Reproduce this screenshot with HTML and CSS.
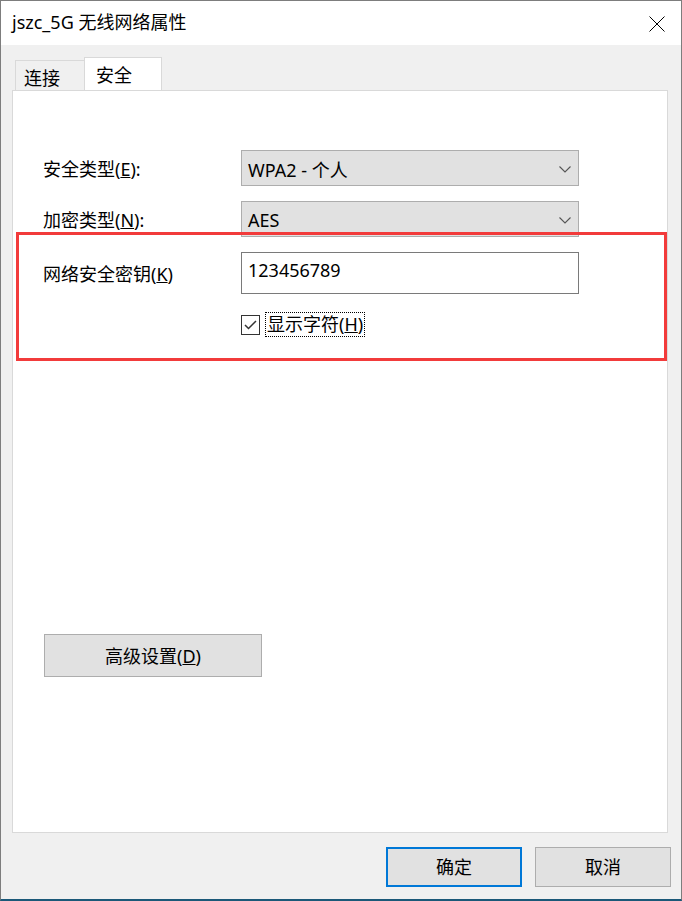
FILE: index.html
```html
<!DOCTYPE html>
<html lang="zh-CN">
<head>
    <meta charset="UTF-8">
    <meta name="viewport" content="width=device-width, initial-scale=1.0">
    <title>jszc_5G 无线网络属性</title>
    <link rel="stylesheet" href="styles.css">
</head>
<body>
    <div class="window">
        <div class="titlebar">
            <span class="title">jszc_5G 无线网络属性</span>
            <svg class="close" width="16" height="16" viewBox="0 0 16 16">
                <path d="M0.5 0.5 L15.5 15.5 M15.5 0.5 L0.5 15.5" stroke="#000" stroke-width="1" fill="none"/>
            </svg>
        </div>

        <div class="client">
            <div class="tabs">
                <div class="tab">连接</div>
                <div class="tab active">安全</div>
            </div>

            <div class="panel">
                <div class="row">
                    <label>安全类型(<u>E</u>):</label>
                    <div class="combo">
                        <span>WPA2 - 个人</span>
                        <svg width="12" height="7" viewBox="0 0 12 7">
                            <path d="M0.5 0.5 L6 6 L11.5 0.5" stroke="#555" stroke-width="1.1" fill="none"/>
                        </svg>
                    </div>
                </div>

                <div class="row">
                    <label>加密类型(<u>N</u>):</label>
                    <div class="combo">
                        <span>AES</span>
                        <svg width="12" height="7" viewBox="0 0 12 7">
                            <path d="M0.5 0.5 L6 6 L11.5 0.5" stroke="#555" stroke-width="1.1" fill="none"/>
                        </svg>
                    </div>
                </div>

                <div class="row">
                    <label>网络安全密钥(<u>K</u>)</label>
                    <div class="edit">123456789</div>
                </div>

                <div class="row check-row">
                    <span></span>
                    <div class="check">
                        <span class="box">
                            <svg width="13" height="10" viewBox="0 0 13 10">
                                <path d="M1 5 L4.5 8.5 L12 1" stroke="#333" stroke-width="1.5" fill="none"/>
                            </svg>
                        </span>
                        <span class="check-label">显示字符(<u>H</u>)</span>
                    </div>
                </div>

                <button class="btn advanced">高级设置(<u>D</u>)</button>

                <!-- annotation over the key rows -->
                <div class="highlight"></div>
            </div>

            <div class="footer">
                <button class="btn default">确定</button>
                <button class="btn">取消</button>
            </div>
        </div>
    </div>
</body>
</html>
```

FILE: styles.css
```css
body {
    margin: 0;
    font-family: "Noto Sans", "Noto Sans CJK SC", sans-serif;
    font-size: 18px;
    color: #000;
}
.window {
    width: 682px;
    height: 901px;
    box-sizing: border-box;
    border: 1px solid #7d7d7d;
    border-bottom: 2px solid #1b5878;
    display: flex;
    flex-direction: column;
}
.titlebar {
    height: 44px;
    flex: none;
    background: #fff;
    display: flex;
    align-items: center;
    justify-content: space-between;
    padding: 0 16px 0 11px;
}
.title {
    line-height: 1;
    margin-top: -2px;
}
.close {
    margin-top: 1px;
}
.client {
    flex: 1;
    background: #f0f0f0;
    padding: 12px 13px 0 11px;
    display: flex;
    flex-direction: column;
}
.tabs {
    height: 33px;
    display: flex;
    align-items: flex-end;
    padding-left: 3px;
}
.tab {
    box-sizing: border-box;
    height: 30px;
    width: 70px;
    padding-left: 8px;
    border: 1px solid #d9d9d9;
    border-bottom: none;
    line-height: 30px;
    padding-top: 2px;
}
.tab.active {
    position: relative;
    width: 78px;
    height: 34px;
    margin-left: -1px;
    margin-bottom: -1px;
    padding-left: 11px;
    padding-top: 0;
    background: #fff;
    line-height: 34px;
}
.panel {
    position: relative;
    height: 743px;
    box-sizing: border-box;
    background: #fff;
    border: 1px solid #d9d9d9;
    padding: 59px 0 0 30px;
}
.row {
    display: grid;
    grid-template-columns: 198px 338px;
    align-items: center;
    margin-bottom: 15px;
}
.row label {
    line-height: 1;
    padding-top: 2px;
}
.combo {
    box-sizing: border-box;
    height: 36px;
    background: #e1e1e1;
    border: 1px solid #adadad;
    display: flex;
    align-items: center;
    justify-content: space-between;
    padding: 2px 7px 0 6px;
}
.edit {
    box-sizing: border-box;
    height: 42px;
    border: 1px solid #7a7a7a;
    padding: 5px 6px 0;
    line-height: 24px;
}
.check-row {
    margin-top: 18px;
    margin-bottom: 0;
}
.check {
    display: flex;
    align-items: center;
    height: 25px;
}
.box {
    box-sizing: border-box;
    width: 19px;
    height: 20px;
    border: 1px solid #333;
    display: flex;
    align-items: center;
    justify-content: center;
}
.check-label {
    margin-left: 5px;
    border: 1px dotted #000;
    padding: 0 1px;
    line-height: 23px;
}
.btn {
    box-sizing: border-box;
    font: inherit;
    color: #000;
    background: #e1e1e1;
    border: 1px solid #adadad;
    padding: 0;
    line-height: 1;
}
.advanced {
    display: block;
    width: 218px;
    height: 43px;
    margin: 297px 0 0 1px;
}
.highlight {
    position: absolute;
    left: 3px;
    top: 141px;
    width: 651px;
    height: 129px;
    box-sizing: border-box;
    border: 3px solid #f23b3b;
}
.footer {
    display: flex;
    justify-content: flex-end;
    gap: 13px;
    margin: 14px -3px 0 0;
}
.footer .btn {
    width: 136px;
    height: 40px;
}
.footer .default {
    border: 2px solid #0078d7;
}
```
